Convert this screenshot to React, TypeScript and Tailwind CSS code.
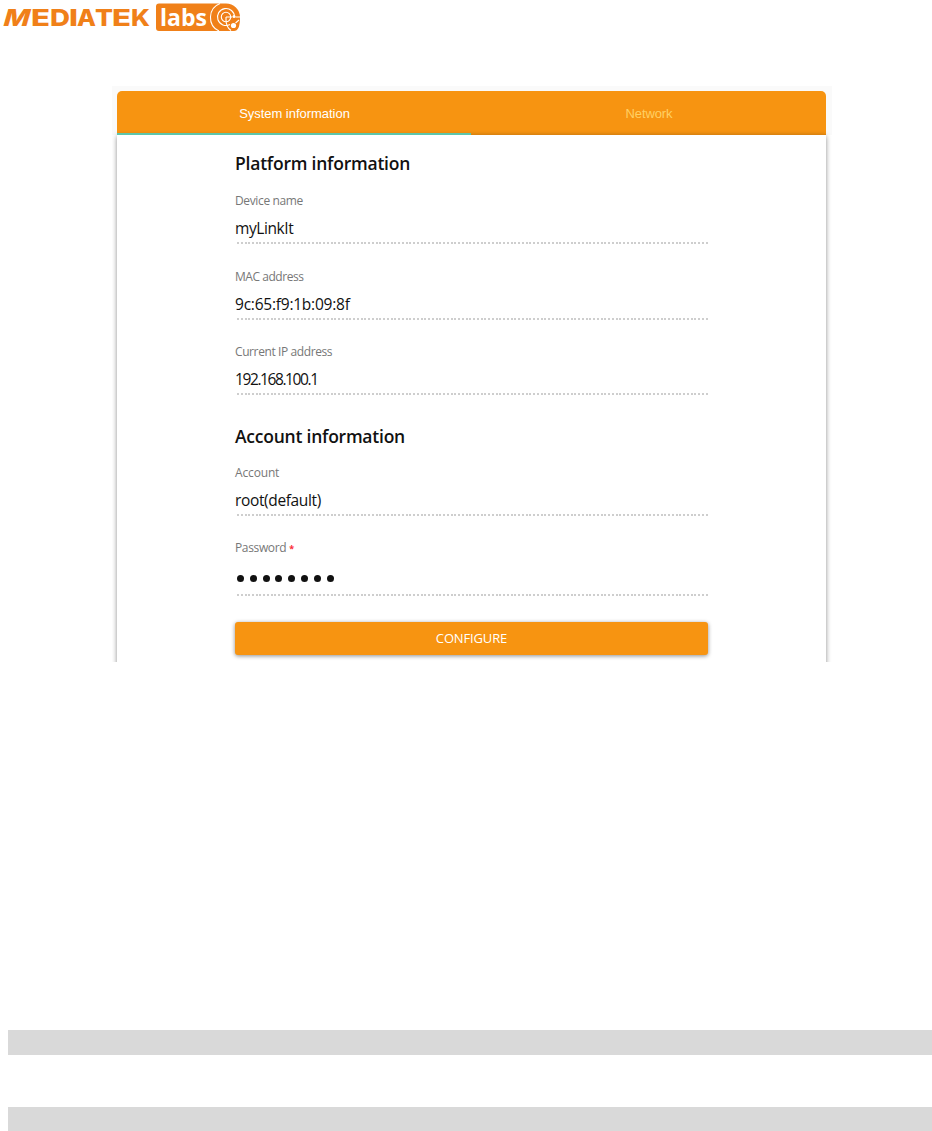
interface FieldProps {
  label: string;
  value: string;
  labelClass?: string;
  valueClass?: string;
}

const DOTTED_LINE =
  "ml-[2px] h-[2px] bg-[repeating-linear-gradient(to_right,#cecece_0_2px,transparent_2px_3.75px)]";

function Logo() {
  return (
    <svg width="244" height="34" viewBox="0 0 244 34" className="block" aria-label="MediaTek Labs">
      <g fill="#f08019" fontFamily="Inter, sans-serif" fontWeight="800" fontSize="23.5">
        <text transform="translate(2 26) skewX(-16)" textLength="26" lengthAdjust="spacingAndGlyphs">M</text>
        <text x="31" y="26" textLength="19" lengthAdjust="spacingAndGlyphs">E</text>
        <text x="50" y="26" textLength="20" lengthAdjust="spacingAndGlyphs">D</text>
        <text x="69" y="26" textLength="9" lengthAdjust="spacingAndGlyphs">I</text>
        <text x="77" y="26" textLength="19" lengthAdjust="spacingAndGlyphs">A</text>
        <text x="95" y="26" textLength="18" lengthAdjust="spacingAndGlyphs">T</text>
        <text x="112" y="26" textLength="19" lengthAdjust="spacingAndGlyphs">E</text>
        <text x="131" y="26" textLength="19" lengthAdjust="spacingAndGlyphs">K</text>
      </g>
      <path d="M159 3.5H226A14 14 0 0 1 240 17.5Q240 31 234 31H159Q156 31 156 28V6.5Q156 3.5 159 3.5Z" fill="#f08019" />
      <text x="160" y="26" fill="#fff" fontFamily="Open Sans, sans-serif" fontWeight="700" fontSize="24" textLength="47" lengthAdjust="spacingAndGlyphs">labs</text>
      <g fill="none" stroke="#fff" strokeWidth="1.1">
        <path d="M219 31A15 15 0 0 1 220 3.5" />
        <path d="M230 24.5A8.5 8.5 0 1 1 234.5 17" />
        <circle cx="226" cy="17" r="4.7" />
        <path d="M226 17V20Q226 27 231 30.5M226 17H232M235.5 17H240M235.5 23L239 20" />
      </g>
      <circle cx="233.5" cy="25.5" r="2.6" fill="#fff" />
      <circle cx="234" cy="16.5" r="1.5" fill="#fff" />
    </svg>
  );
}

function Field({ label, value, labelClass = "", valueClass = "" }: FieldProps) {
  return (
    <div className="h-[75.6px]">
      <p className={`h-6 text-[12px] leading-[25px] whitespace-nowrap text-[#777] ${labelClass}`}>{label}</p>
      <p className={`mt-[3px] h-[27px] text-[15.5px] leading-[26px] whitespace-nowrap text-[#111] ${valueClass}`}>
        {value}
      </p>
      <div className={DOTTED_LINE} />
    </div>
  );
}

export default function App() {
  return (
    <div className="flex h-[1131px] w-[932px] flex-col overflow-hidden bg-white font-['Open_Sans',sans-serif]">
      <header className="h-[86px]">
        <Logo />
      </header>

      <main className="ml-[112px] h-[576px] w-[720px] overflow-hidden bg-[linear-gradient(#fafafa_0_49px,#fff_49px)] px-[5px] pt-[5px]">
        <nav className="flex h-11 w-[709px] overflow-hidden rounded-t-[5px] bg-[#f79411] font-['Liberation_Sans',sans-serif] text-[13px]">
          <div className="flex w-[354px] items-center justify-center border-b-2 border-[#5dc5aa] pt-[3px] pl-px tracking-[-0.03px] text-white">
            System information
          </div>
          <div className="flex flex-1 items-center justify-center border-b border-[#dc830f] pt-[2px] pl-px tracking-[-0.1px] text-[#ffd064]">
            Network
          </div>
        </nav>

        <section className="h-[560px] w-[709px] bg-white px-[118px] pt-[17px] shadow-[0_1px_5px_rgba(0,0,0,0.45)]">
          <h2 className="h-6 text-[17.5px] leading-[23px] font-semibold tracking-[-0.22px] text-[#111]">
            Platform information
          </h2>
          <div className="mt-3">
            <Field label="Device name" value="myLinkIt" labelClass="tracking-[-0.36px]" valueClass="tracking-[-0.42px]" />
            <Field label="MAC address" value="9c:65:f9:1b:09:8f" labelClass="tracking-[-0.46px]" valueClass="tracking-[-0.23px]" />
            <Field label="Current IP address" value="192.168.100.1" labelClass="tracking-[-0.4px]" valueClass="tracking-[-1.4px]" />
          </div>
          <h2 className="mt-[10px] h-6 text-[17.5px] leading-[23px] font-semibold tracking-[-0.23px] text-[#111]">
            Account information
          </h2>
          <div className="mt-[11px]">
            <Field label="Account" value="root(default)" labelClass="tracking-[-0.15px]" valueClass="tracking-[-0.36px]" />
            <p className="h-6 text-[12px] leading-[25px] tracking-[-0.35px] text-[#777]">
              Password<span className="ml-[3px] text-[9px] font-bold text-red-500">*</span>
            </p>
            <div className="mt-[16px] ml-[2px] flex gap-[5.8px]">
              {Array.from({ length: 8 }, (_, i) => (
                <span key={i} className="size-[7px] rounded-full bg-[#111]" />
              ))}
            </div>
            <div className={`mt-[12px] ${DOTTED_LINE}`} />
          </div>
          <button className="mt-[26px] block h-[33px] w-[473px] rounded-[3px] bg-[#f79411] text-[13px] tracking-[-0.15px] text-white shadow-[0_1px_4px_rgba(0,0,0,0.45)]">
            CONFIGURE
          </button>
        </section>
      </main>

      <div className="mt-[368px] ml-2 h-[25px] shrink-0 bg-[#d9d9d9]" />
      <div className="mt-[52px] ml-2 h-6 shrink-0 bg-[#d9d9d9]" />
    </div>
  );
}
